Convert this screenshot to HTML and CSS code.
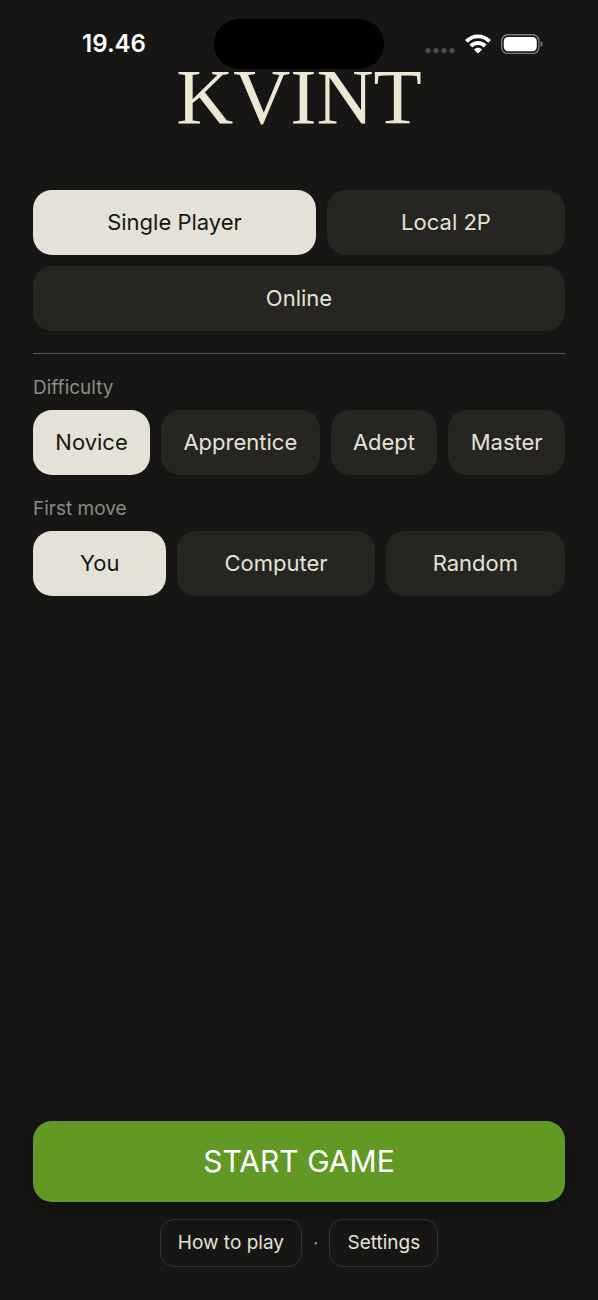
FILE: index.html
```html
<!DOCTYPE html>
<html lang="en">
<head>
<meta charset="utf-8">
<meta name="viewport" content="width=device-width, initial-scale=1">
<title>Kvint</title>
<link rel="stylesheet" href="styles.css">
</head>
<body>
<div class="app">
  <header class="status-bar">
    <time class="clock">19.46</time>
    <div class="island"></div>
    <div class="indicators">
      <svg class="signal" width="30" height="20" viewBox="0 0 30 20" fill="#4b4a48" aria-hidden="true">
        <circle cx="3" cy="16.6" r="2.7"/><circle cx="11" cy="16.6" r="2.7"/><circle cx="19" cy="16.6" r="2.7"/><circle cx="27" cy="16.6" r="2.7"/>
      </svg>
      <svg class="wifi" width="26" height="20" viewBox="0 0 26 20" fill="none" stroke="#fff" stroke-width="3.9" aria-hidden="true">
        <path d="M1.4 7.4C8 .7 18 .7 24.6 7.4"/>
        <path d="M5.8 12C9.9 8 16.1 8 20.2 12"/>
        <path d="M13 19.4L8.9 15.5C11.3 13.2 14.7 13.2 17.1 15.5Z" fill="#fff" stroke="none"/>
      </svg>
      <svg class="battery" width="42" height="20" viewBox="0 0 42 20" aria-hidden="true">
        <rect x=".7" y=".8" width="37.2" height="18.6" rx="6" fill="none" stroke="#7a7977" stroke-width="1.4"/>
        <rect x="2.8" y="2.9" width="33" height="14.4" rx="4.2" fill="#fff"/>
        <path d="M39.6 7.2C42.4 8 42.4 12.2 39.6 13Z" fill="#7a7977"/>
      </svg>
    </div>
  </header>

  <h1 class="title">KVINT</h1>

  <main class="setup">
    <div class="options" role="group" aria-label="Game mode">
      <button class="option selected" type="button" aria-pressed="true">Single Player</button>
      <button class="option" type="button" aria-pressed="false">Local 2P</button>
      <button class="option full" type="button" aria-pressed="false">Online</button>
    </div>
    <hr class="divider">
    <section class="setting">
      <h2 class="label" id="difficulty">Difficulty</h2>
      <div class="options" role="group" aria-labelledby="difficulty">
        <button class="option selected" type="button" aria-pressed="true">Novice</button>
        <button class="option" type="button" aria-pressed="false">Apprentice</button>
        <button class="option" type="button" aria-pressed="false">Adept</button>
        <button class="option" type="button" aria-pressed="false">Master</button>
      </div>
    </section>
    <section class="setting">
      <h2 class="label" id="first-move">First move</h2>
      <div class="options" role="group" aria-labelledby="first-move">
        <button class="option selected" type="button" aria-pressed="true">You</button>
        <button class="option" type="button" aria-pressed="false">Computer</button>
        <button class="option" type="button" aria-pressed="false">Random</button>
      </div>
    </section>
  </main>

  <footer class="actions">
    <button class="start" type="button">START GAME</button>
    <nav class="links">
      <button class="link" type="button">How to play</button>
      <span class="dot">·</span>
      <button class="link" type="button">Settings</button>
    </nav>
  </footer>
</div>
</body>
</html>
```
FILE: styles.css
```css
* {
  box-sizing: border-box;
}

body {
  margin: 0;
  background: #171614;
  color: #e4e2d6;
  font-family: Inter, "Liberation Sans", sans-serif;
}

button {
  font: inherit;
  color: inherit;
  cursor: pointer;
}

.app {
  display: flex;
  flex-direction: column;
  min-height: 100vh;
}

.status-bar {
  display: grid;
  grid-template-columns: 1fr 170px 1fr;
  align-items: center;
  padding: 19px 14px 0;
}

.clock {
  color: #fff;
  font-size: 24px;
  font-weight: 600;
  line-height: 50px;
  text-align: center;
}

.island {
  height: 50px;
  border-radius: 25px;
  background: #000;
}

.indicators {
  display: flex;
  justify-content: center;
  gap: 10px;
}

.title {
  margin: 0;
  color: #ebe8d4;
  font-family: "Liberation Serif", serif;
  font-size: 79px;
  font-weight: 400;
  line-height: 55px;
  text-align: center;
}

.setup {
  display: flex;
  flex-direction: column;
  padding: 66px 33px 0;
}

.options {
  display: flex;
  flex-wrap: wrap;
  gap: 11px;
}

.option {
  flex: 1 1 auto;
  padding: 0 20px;
  border: 0;
  border-radius: 19px;
  background: #262522;
  font-size: 22px;
  line-height: 65px;
}

.full {
  flex-basis: 100%;
}

.selected {
  background: #e4e2d6;
  color: #171614;
}

.divider {
  width: 100%;
  height: 1px;
  margin: 22px 0;
  border: 0;
  background: #5b5a57;
}

.setting + .setting {
  margin-top: 22px;
}

.label {
  margin: 0 0 11px;
  color: #8b8a85;
  font-size: 19px;
  font-weight: 400;
  line-height: 23px;
}

.actions {
  display: flex;
  flex-direction: column;
  gap: 17px;
  margin-top: auto;
  padding: 22px 33px 33px;
}

.start {
  padding: 0;
  border: 0;
  border-radius: 19px;
  background: #629924;
  box-shadow: 0 4px 16px rgba(0, 0, 0, 0.35);
  color: #fff;
  font-size: 30px;
  line-height: 81px;
}

.links {
  display: flex;
  justify-content: center;
  align-items: center;
  gap: 11px;
}

.link {
  padding: 0 17px;
  border: 1px solid #33322f;
  border-radius: 14px;
  background: transparent;
  font-size: 19px;
  line-height: 46px;
}

.dot {
  color: #8b8a85;
  font-size: 19px;
}
```
